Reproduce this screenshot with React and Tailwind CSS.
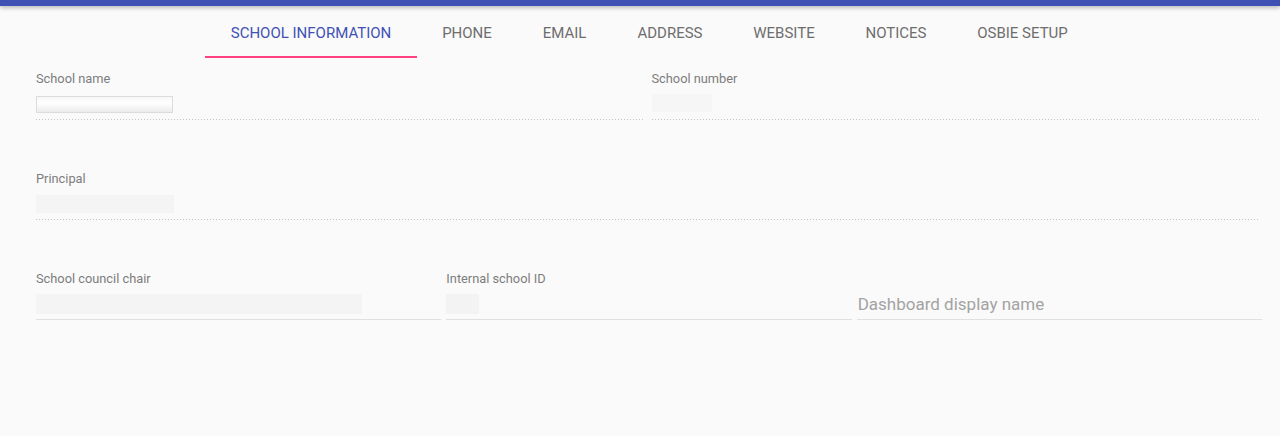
import React from "react";

const tabs = [
  { label: "SCHOOL INFORMATION", w: "w-[212px]", active: true },
  { label: "PHONE", w: "w-[100px]" },
  { label: "EMAIL", w: "w-[95px]" },
  { label: "ADDRESS", w: "w-[116px]" },
  { label: "WEBSITE", w: "w-[112px]" },
  { label: "NOTICES", w: "w-[112px]" },
  { label: "OSBIE SETUP", w: "w-[141px]" },
];

function DottedLine() {
  return (
    <div className="h-px w-full bg-[linear-gradient(to_right,#c4c4c4_34%,transparent_0%)] bg-[length:3px_1px] bg-repeat-x" />
  );
}

function Field({ label, children, dotted, className = "" }) {
  return (
    <div className={"flex flex-col " + className}>
      <div className="h-[16px] pt-[1px] text-[12.8px] leading-[16px] text-[#7d7d7d]">{label}</div>
      <div className="relative h-[33px]">{children}</div>
      {dotted ? <DottedLine /> : <div className="h-px w-full bg-[#e0e0e0]" />}
    </div>
  );
}

export default function App() {
  return (
    <div className="h-[436px] w-full overflow-hidden bg-[#fafafa] font-['Roboto',sans-serif]">
      <div className="relative z-10 h-[6px] bg-[#3f51b5] shadow-[0_2px_4px_rgba(0,0,0,0.25)]" />
      <div className="flex justify-center pl-[18px]">
        {tabs.map((t) => (
          <div
            key={t.label}
            className={
              "flex h-[52px] flex-col items-center justify-center relative text-[15px] font-normal " +
              t.w +
              (t.active ? " text-[#3f51b5]" : " text-[#6e6e6e]")
            }
          >
            <span className="mt-[2px]">{t.label}</span>
            {t.active && <div className="absolute bottom-0 left-0 h-[2px] w-full bg-[#ff4081]" />}
          </div>
        ))}
      </div>
      <div className="flex flex-col gap-[50px] pt-[12px]">
        <div className="flex gap-[7px] pl-[36px] pr-[20px]">
          <Field label="School name" dotted className="flex-1">
            <div className="absolute left-0 top-[10px] h-[17px] w-[137px] border border-[#dcdcdc] bg-[linear-gradient(to_bottom,#f6f6f6,#ffffff_40%,#ececec)]" />
          </Field>
          <Field label="School number" dotted className="flex-1">
            <div className="absolute left-0 top-[8px] h-[18px] w-[60px] bg-[#f6f6f6]" />
          </Field>
        </div>
        <div className="flex pl-[36px] pr-[20px]">
          <Field label="Principal" dotted className="flex-1">
            <div className="absolute left-0 top-[9px] h-[18px] w-[138px] bg-[#f4f4f4]" />
          </Field>
        </div>
        <div className="grid grid-cols-3 gap-[5px] pl-[36px] pr-[18px]">
          <Field label="School council chair">
            <div className="absolute left-0 top-[8px] h-[20px] w-[326px] bg-[#f4f4f4]" />
          </Field>
          <Field label="Internal school ID">
            <div className="absolute left-0 top-[8px] h-[20px] w-[33px] bg-[#f3f3f3]" />
          </Field>
          <Field label="">
            <div className="absolute left-[1px] top-[8px] text-[17px] leading-[20px] text-[#a3a3a3]">
              Dashboard display name
            </div>
          </Field>
        </div>
      </div>
    </div>
  );
}
